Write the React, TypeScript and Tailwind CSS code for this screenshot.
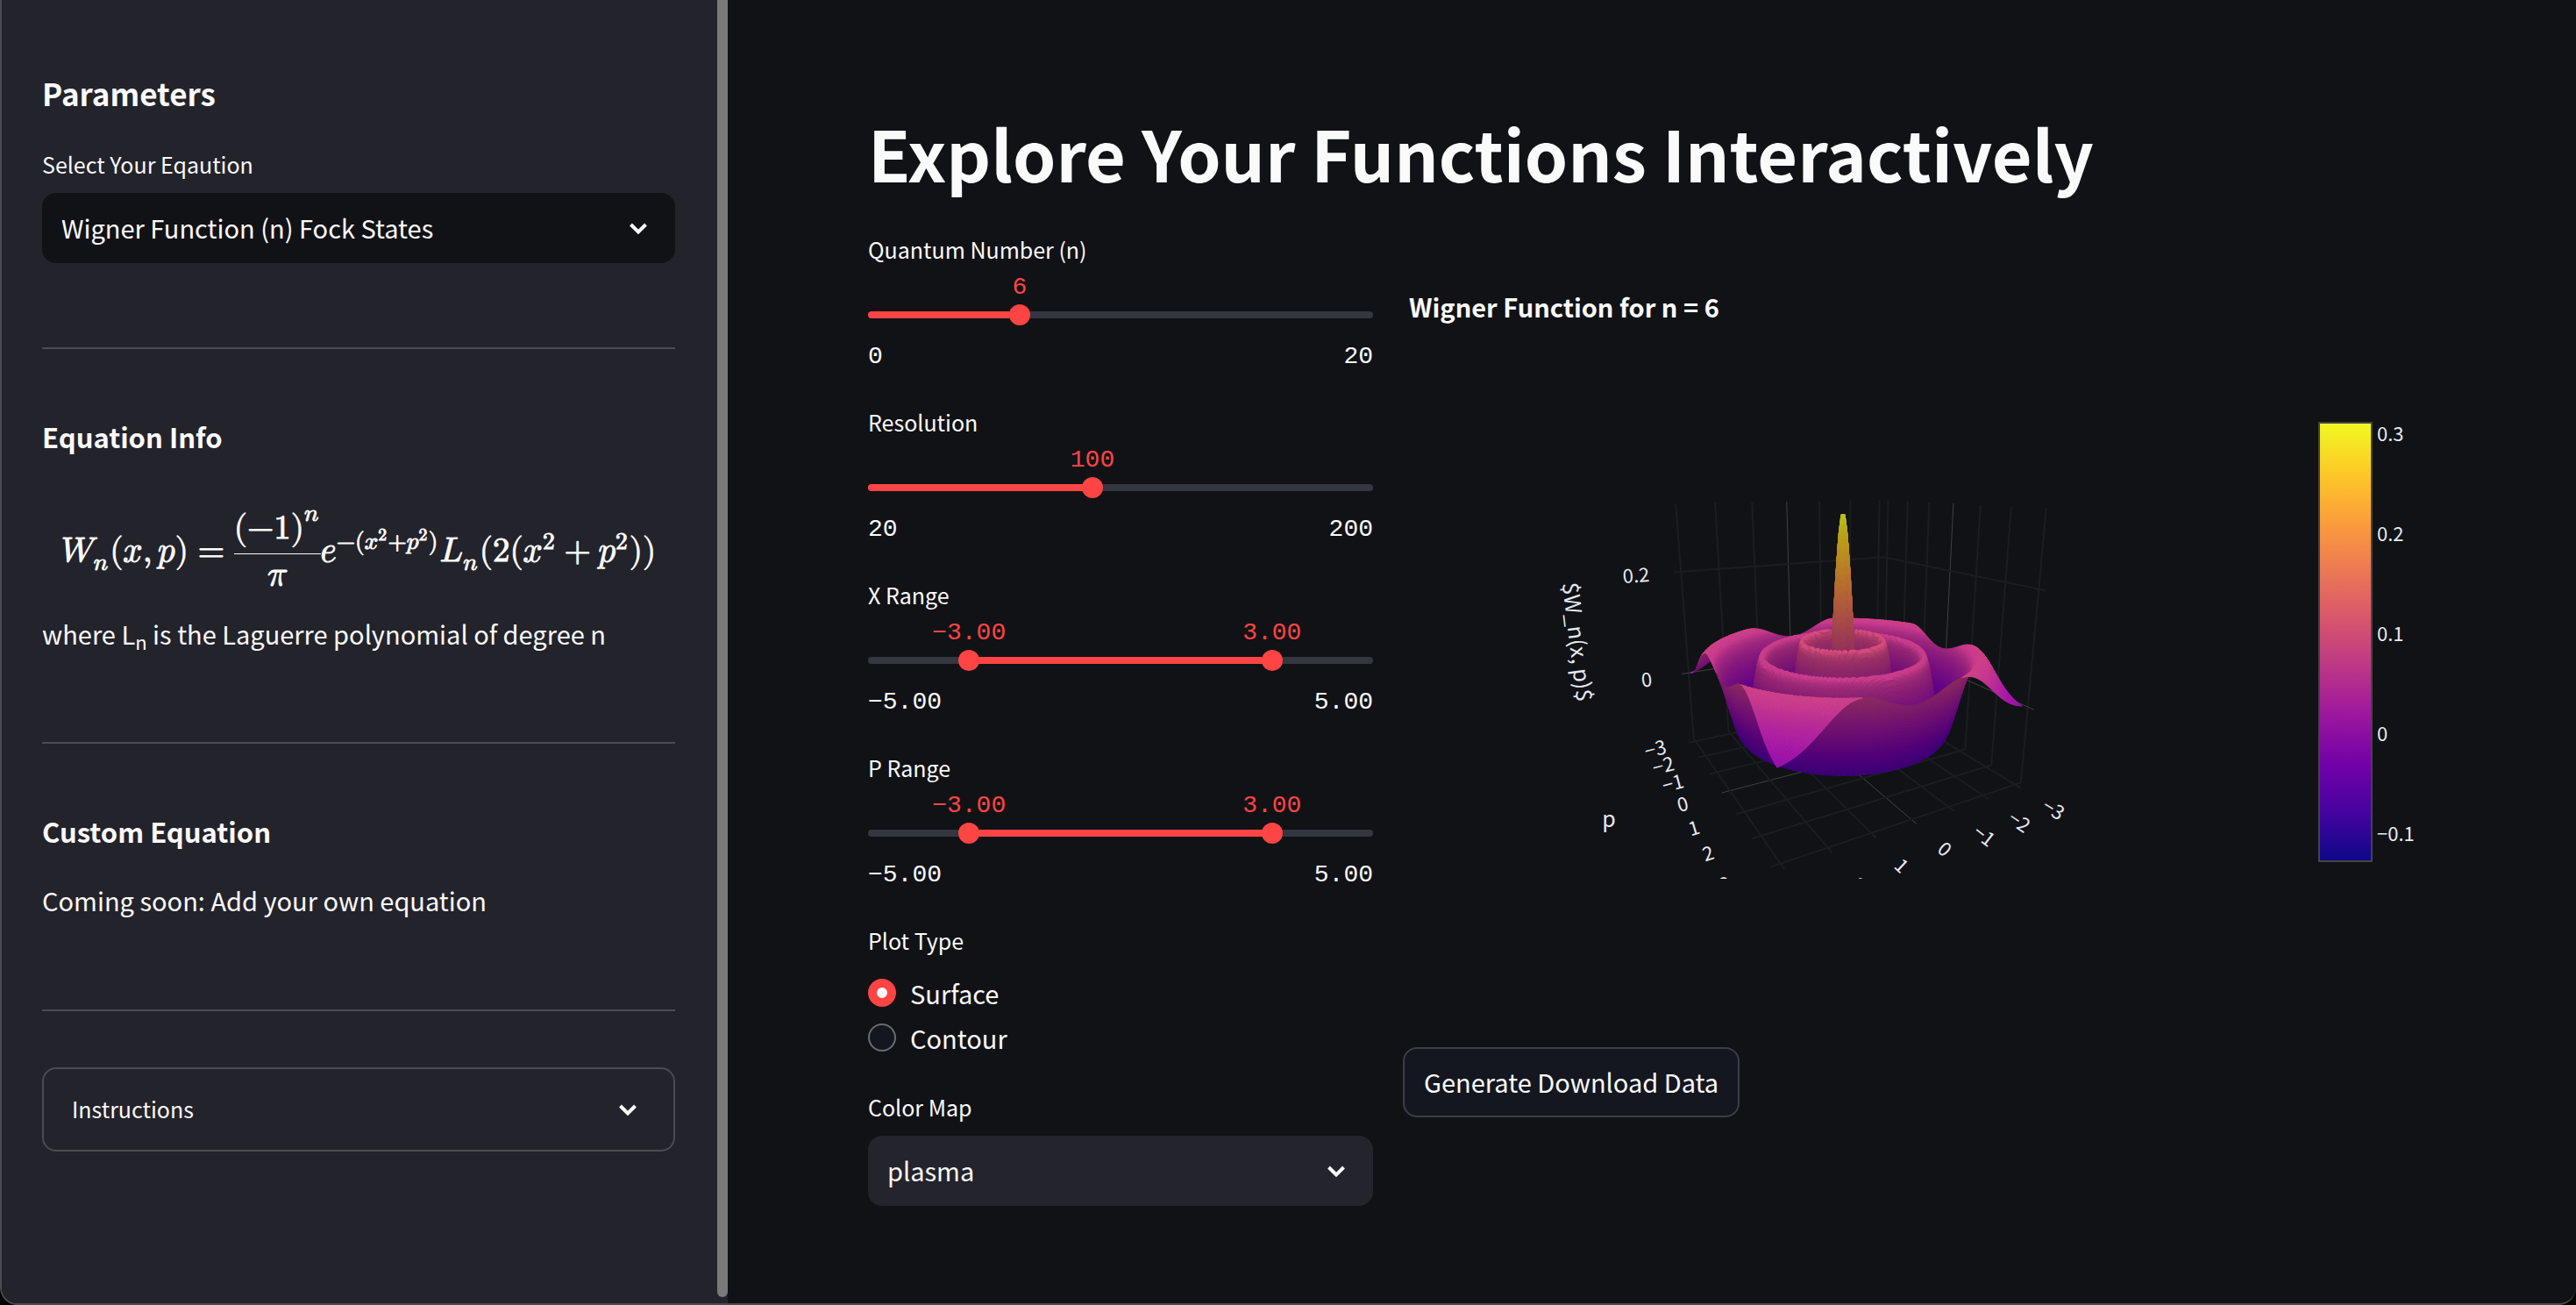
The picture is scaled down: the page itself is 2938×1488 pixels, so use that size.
import React, { useId, useMemo, useState } from "react";

/* ---------- Wigner surface ---------- */

const HALF_RANGE = 3;
const AXIS = 3.1875;
const Z_LOW = -0.1412;
const Z_HIGH = 0.3247;
const C_LOW = -0.1275;
const C_HIGH = 0.311;

const PLASMA: [number, number, number][] = [
  [13, 8, 135],
  [70, 3, 159],
  [114, 1, 168],
  [156, 23, 158],
  [189, 55, 134],
  [216, 87, 107],
  [237, 121, 83],
  [251, 159, 58],
  [253, 202, 38],
  [240, 249, 33],
];

function laguerre(n: number, x: number) {
  let previous = 1;
  let current = 1 - x;
  if (n === 0) return previous;
  for (let k = 1; k < n; k++) {
    const next = ((2 * k + 1 - x) * current - k * previous) / (k + 1);
    previous = current;
    current = next;
  }
  return current;
}

function wigner(n: number, x: number, p: number) {
  const r2 = x * x + p * p;
  return ((n % 2 ? -1 : 1) / Math.PI) * Math.exp(-r2) * laguerre(n, 2 * r2);
}

/* Perspective camera: maps data space to chart pixels and a depth. */
function project(x: number, p: number, z: number): [number, number, number] {
  const a = x / 6.375;
  const b = p / 6.375;
  const c = (z - 0.09175) / 0.4659;
  const w = -0.2163 * a - 0.38846 * b - 0.12387 * c + 1;
  const u = (-0.87944 * a + 0.48194 * b - 0.00111 * c + 0.00692) / w;
  const v = (0.16563 * a + 0.29997 * b - 0.94653 * c - 0.16209) / w;
  return [500 + u * 300, 512 + v * 300, w];
}

function shade(z: number, light: number) {
  const t = Math.min(0.9999, Math.max(0, (z - C_LOW) / (C_HIGH - C_LOW))) * 9;
  const i = Math.floor(t);
  const f = t - i;
  const mix = PLASMA[i].map((c, k) =>
    Math.min(255, Math.round((c + (PLASMA[i + 1][k] - c) * f) * light)),
  );
  return `rgb(${mix[0]},${mix[1]},${mix[2]})`;
}

/* How far the surface normal points up, 0 on a cliff and 1 on a plateau. */
function upness(n: number, x: number, p: number) {
  const h = 0.03;
  const scale = 6.375 / 0.4659 / (2 * h);
  const sx = (wigner(n, x + h, p) - wigner(n, x - h, p)) * scale;
  const sp = (wigner(n, x, p + h) - wigner(n, x, p - h)) * scale;
  return 1 / Math.sqrt(1 + sx * sx + sp * sp);
}

type Vertex = { x: number; p: number; z: number; up: number; at: [number, number, number] };

function blend(a: Vertex, b: Vertex, c: Vertex, d: Vertex, s: number, t: number): Vertex {
  const mix = (k: "x" | "p" | "z" | "up") =>
    (a[k] * (1 - s) + b[k] * s) * (1 - t) + (d[k] * (1 - s) + c[k] * s) * t;
  const x = mix("x");
  const p = mix("p");
  const z = mix("z");
  return { x, p, z, up: mix("up"), at: project(x, p, z) };
}

function buildSurface(n: number, resolution: number) {
  const step = (2 * HALF_RANGE) / (resolution - 1);
  const quads: { d: string; fill: string; depth: number }[] = [];
  const push = (a: Vertex, b: Vertex, c: Vertex, d: Vertex) => {
    const area =
      (c.at[0] - a.at[0]) * (d.at[1] - b.at[1]) - (c.at[1] - a.at[1]) * (d.at[0] - b.at[0]);
    const up = (a.up + b.up + c.up + d.up) / 4;
    const s = Math.min(1, Math.max(0, (up - 0.08) / 0.5));
    const light = area > 0 ? 0.72 : 0.74 + 0.32 * s * s * (3 - 2 * s);
    quads.push({
      d: [a, b, c, d].map((q) => `${q.at[0].toFixed(1)},${q.at[1].toFixed(1)}`).join(" "),
      fill: shade((a.z + b.z + c.z + d.z) / 4, light),
      depth: a.at[2] + b.at[2] + c.at[2] + d.at[2],
    });
  };
  const grid: Vertex[][] = Array.from({ length: resolution }, (_, i) =>
    Array.from({ length: resolution }, (_, j) => {
      const x = -HALF_RANGE + i * step;
      const p = -HALF_RANGE + j * step;
      const z = wigner(n, x, p);
      return { x, p, z, up: upness(n, x, p), at: project(x, p, z) };
    }),
  );
  for (let i = 0; i < resolution - 1; i++) {
    for (let j = 0; j < resolution - 1; j++) {
      const a = grid[i][j];
      const b = grid[i + 1][j];
      const c = grid[i + 1][j + 1];
      const d = grid[i][j + 1];
      const heights = [a.z, b.z, c.z, d.z];
      const rise = Math.max(...heights) - Math.min(...heights);
      const parts = Math.min(5, Math.max(1, Math.ceil(rise / 0.009)));
      if (parts === 1) {
        push(a, b, c, d);
        continue;
      }
      for (let s = 0; s < parts; s++) {
        for (let t = 0; t < parts; t++) {
          push(
            blend(a, b, c, d, s / parts, t / parts),
            blend(a, b, c, d, (s + 1) / parts, t / parts),
            blend(a, b, c, d, (s + 1) / parts, (t + 1) / parts),
            blend(a, b, c, d, s / parts, (t + 1) / parts),
          );
        }
      }
    }
  }
  return quads.sort((q, r) => r.depth - q.depth);
}

function gridLines() {
  const lines: { from: number[]; to: number[]; zero: boolean }[] = [];
  for (let k = -3; k <= 3; k++) {
    const zero = k === 0;
    lines.push({ from: [AXIS, k, Z_LOW], to: [-AXIS, k, Z_LOW], zero });
    lines.push({ from: [k, AXIS, Z_LOW], to: [k, -AXIS, Z_LOW], zero });
    lines.push({ from: [k, -AXIS, Z_LOW], to: [k, -AXIS, Z_HIGH], zero });
    lines.push({ from: [-AXIS, k, Z_LOW], to: [-AXIS, k, Z_HIGH], zero });
  }
  for (const z of [0, 0.2]) {
    lines.push({ from: [AXIS, -AXIS, z], to: [-AXIS, -AXIS, z], zero: z === 0 });
    lines.push({ from: [-AXIS, -AXIS, z], to: [-AXIS, AXIS, z], zero: z === 0 });
  }
  return lines;
}

const TICKS: { text: string; x: number; y: number; turn: number }[] = [
  { text: "0.2", x: 266, y: 388, turn: -4 },
  { text: "0", x: 278, y: 507, turn: -6 },
  { text: "−3", x: 288, y: 586, turn: -14 },
  { text: "−2", x: 297, y: 605, turn: -14 },
  { text: "−1", x: 308, y: 625, turn: -15 },
  { text: "0", x: 319, y: 649, turn: -15 },
  { text: "1", x: 332, y: 676, turn: -17 },
  { text: "2", x: 348, y: 705, turn: -18 },
  { text: "3", x: 367, y: 740, turn: -18 },
  { text: "−3", x: 742, y: 655, turn: 31 },
  { text: "−2", x: 703, y: 669, turn: 34 },
  { text: "−1", x: 663, y: 685, turn: 38 },
  { text: "0", x: 618, y: 700, turn: 40 },
  { text: "1", x: 569, y: 719, turn: 43 },
  { text: "2", x: 520, y: 741, turn: 45 },
];

const COLORBAR_TICKS = ["0.3", "0.2", "0.1", "0", "−0.1"];

function SurfaceChart({ n, resolution }: { n: number; resolution: number }) {
  const quads = useMemo(() => buildSurface(n, resolution), [n, resolution]);
  const lines = useMemo(gridLines, []);
  return (
    <svg
      viewBox="0 0 1178 900"
      className="block w-full font-['Noto_Sans_CJK_SC',sans-serif]"
      role="img"
      aria-label={`Wigner Function for n = ${n}`}
    >
      <defs>
        <linearGradient id="plasma-bar" x1="0" y1="1" x2="0" y2="0">
          {PLASMA.map((c, i) => (
            <stop key={i} offset={i / 9} stopColor={`rgb(${c[0]},${c[1]},${c[2]})`} />
          ))}
        </linearGradient>
        <clipPath id="scene">
          <rect x="0" y="100" width="1000" height="634" />
        </clipPath>
      </defs>

      <text x="7" y="94" className="fill-[#fafafa] text-[29px] font-bold">
        Wigner Function for n = {n}
      </text>

      <g clipPath="url(#scene)">
        {lines.map((line, i) => {
          const a = project(line.from[0], line.from[1], line.from[2]);
          const b = project(line.to[0], line.to[1], line.to[2]);
          return (
            <line
              key={i}
              x1={a[0]}
              y1={a[1]}
              x2={b[0]}
              y2={b[1]}
              className={line.zero ? "stroke-[#414141]" : "stroke-[#1c1d20]"}
              strokeWidth={line.zero ? 1 : 2}
            />
          );
        })}
        {quads.map((q, i) => (
          <polygon key={i} points={q.d} fill={q.fill} stroke={q.fill} strokeWidth="1" />
        ))}
        <g className="fill-[#e6eaf1] text-[22px]" textAnchor="middle">
          {TICKS.map((t, i) => (
            <text key={i} transform={`translate(${t.x} ${t.y}) rotate(${t.turn})`} y="8">
              {t.text}
            </text>
          ))}
        </g>
        <g className="fill-[#e6eaf1] text-[25px]" textAnchor="middle">
          <text transform="translate(198 464) rotate(83)" y="8">
            $W_n(x, p)$
          </text>
          <text x="235" y="675">
            p
          </text>
        </g>
      </g>

      <rect
        x="1045"
        y="214"
        width="60"
        height="500"
        fill="url(#plasma-bar)"
        className="stroke-[#444444]"
        strokeWidth="2"
      />
      <g className="fill-[#e6eaf1] text-[22px]">
        {COLORBAR_TICKS.map((t, i) => (
          <text key={t} x="1111" y={235 + i * 114}>
            {t}
          </text>
        ))}
      </g>
    </svg>
  );
}

/* ---------- Controls ---------- */

function Chevron() {
  return (
    <svg viewBox="0 0 24 16" className="h-4 w-6 shrink-0" aria-hidden="true">
      <path
        d="M3.5 4 12 12.5 20.5 4"
        fill="none"
        stroke="#fafafa"
        strokeWidth="4"
      />
    </svg>
  );
}

function SelectBox({
  label,
  options,
  tone,
}: {
  label: string;
  options: string[];
  tone: "dark" | "light";
}) {
  const id = useId();
  return (
    <div className="flex flex-col">
      <label htmlFor={id} className="text-[25px] leading-8">
        {label}
      </label>
      <div className="relative mt-[17px]">
        <select
          id={id}
          className={`h-20 w-full appearance-none rounded-2xl pr-20 pl-[22px] text-[29px] outline-none ${
            tone === "dark" ? "bg-[#111216]" : "bg-[#23242c]"
          }`}
        >
          {options.map((o) => (
            <option key={o}>{o}</option>
          ))}
        </select>
        <span className="pointer-events-none absolute inset-y-0 right-[30px] flex items-center">
          <Chevron />
        </span>
      </div>
    </div>
  );
}

const RANGE_CLASS =
  "pointer-events-none absolute inset-y-0 -inset-x-3 h-6 w-[calc(100%+24px)] appearance-none bg-transparent outline-none " +
  "[&::-webkit-slider-thumb]:pointer-events-auto [&::-webkit-slider-thumb]:size-6 [&::-webkit-slider-thumb]:appearance-none [&::-webkit-slider-thumb]:rounded-full [&::-webkit-slider-thumb]:bg-[#ff4444]";

function Slider({
  label,
  min,
  max,
  step,
  start,
  digits = 0,
}: {
  label: string;
  min: number;
  max: number;
  step: number;
  start: number[];
  digits?: number;
}) {
  const [values, setValues] = useState(start);
  const id = useId();
  const show = (v: number) => v.toFixed(digits).replace("-", "−");
  const at = (v: number) => ((v - min) / (max - min)) * 100;
  const low = values.length > 1 ? at(values[0]) : 0;
  const high = at(values[values.length - 1]);
  return (
    <div className="flex flex-col">
      <label htmlFor={`${id}-0`} className="text-[25px] leading-8">
        {label}
      </label>
      <div className="relative mt-3 h-8 font-['Liberation_Mono',monospace] text-[28px] leading-8 text-[#ff4444]">
        {values.map((v, i) => (
          <output
            key={i}
            htmlFor={`${id}-${i}`}
            className="absolute -translate-x-1/2"
            style={{ left: `${at(v)}%` }}
          >
            {show(v)}
          </output>
        ))}
      </div>
      <div className="relative mt-[3px] flex h-6 items-center">
        <div
          className="h-2 w-full rounded-full"
          style={{
            background: `linear-gradient(to right, #343640 ${low}%, #ff4444 ${low}%, #ff4444 ${high}%, #343640 ${high}%)`,
          }}
        />
        {values.map((v, i) => (
          <input
            key={i}
            id={`${id}-${i}`}
            type="range"
            aria-label={values.length > 1 ? `${label} ${i ? "maximum" : "minimum"}` : label}
            min={min}
            max={max}
            step={step}
            value={v}
            onChange={(e) =>
              setValues(values.map((old, k) => (k === i ? Number(e.target.value) : old)))
            }
            className={RANGE_CLASS}
          />
        ))}
      </div>
      <div className="mt-5 flex justify-between font-['Liberation_Mono',monospace] text-[28px] leading-8">
        <span>{show(min)}</span>
        <span>{show(max)}</span>
      </div>
    </div>
  );
}

function PlotType() {
  return (
    <fieldset className="flex flex-col">
      <legend className="text-[25px] leading-8">Plot Type</legend>
      <div className="mt-5 flex flex-col gap-[3px]">
        {["Surface", "Contour"].map((name) => (
          <label key={name} className="flex h-12 items-center gap-4 text-[29px] leading-[48px]">
            <input
              type="radio"
              name="plot-type"
              defaultChecked={name === "Surface"}
              className="size-8 appearance-none rounded-full border-2 border-[#6a6b6e] bg-[#14171f] checked:border-10 checked:border-[#ff4444] checked:bg-[#fafafa]"
            />
            {name}
          </label>
        ))}
      </div>
    </fieldset>
  );
}

/* ---------- Sidebar ---------- */

function WignerEquation() {
  return (
    <math
      display="block"
      className="text-[39px] text-[#fafafa] [-webkit-text-stroke:1px_#fafafa]"
      aria-label="Wigner function of the n-th Fock state"
    >
      <mrow>
        <msub>
          <mi>W</mi>
          <mi>n</mi>
        </msub>
        <mo stretchy="false">(</mo>
        <mi>x</mi>
        <mo>,</mo>
        <mi>p</mi>
        <mo stretchy="false">)</mo>
        <mo>=</mo>
        <mfrac>
          <mrow>
            <mo stretchy="false">(</mo>
            <mo form="prefix" lspace="0" rspace="0">−</mo>
            <mn>1</mn>
            <msup>
              <mo stretchy="false">)</mo>
              <mi>n</mi>
            </msup>
          </mrow>
          <mi>π</mi>
        </mfrac>
        <msup>
          <mi>e</mi>
          <mrow>
            <mo form="prefix" lspace="0" rspace="0">−</mo>
            <mo stretchy="false">(</mo>
            <msup>
              <mi>x</mi>
              <mn>2</mn>
            </msup>
            <mo lspace="0" rspace="0">+</mo>
            <msup>
              <mi>p</mi>
              <mn>2</mn>
            </msup>
            <mo stretchy="false">)</mo>
          </mrow>
        </msup>
        <msub>
          <mi>L</mi>
          <mi>n</mi>
        </msub>
        <mo stretchy="false">(</mo>
        <mn>2</mn>
        <mo stretchy="false">(</mo>
        <msup>
          <mi>x</mi>
          <mn>2</mn>
        </msup>
        <mo>+</mo>
        <msup>
          <mi>p</mi>
          <mn>2</mn>
        </msup>
        <mo stretchy="false">)</mo>
        <mo stretchy="false">)</mo>
      </mrow>
    </math>
  );
}

function Divider() {
  return <hr className="border-t-2 border-[#4b4c51]" />;
}

function Sidebar() {
  return (
    <aside className="flex w-[828px] shrink-0 bg-[#23232b]">
      <div className="flex grow flex-col pt-[82px] pr-12 pl-[46px]">
        <h2 className="mb-[41px] text-[35px] leading-[48px] font-bold">Parameters</h2>
        <SelectBox
          label="Select Your Eqaution"
          options={["Wigner Function (n) Fock States"]}
          tone="dark"
        />
        <div className="mt-24 mb-20">
          <Divider />
        </div>
        <h3 className="text-[31px] leading-10 font-bold">Equation Info</h3>
        <div className="mt-[47px] flex h-[120px] items-center justify-center">
          <WignerEquation />
        </div>
        <p className="mt-[13px] text-[29px] leading-[48px]">
          where L<sub className="text-[22px]">n</sub> is the Laguerre polynomial of degree n
        </p>
        <div className="mt-[100px] mb-20">
          <Divider />
        </div>
        <h3 className="text-[31px] leading-10 font-bold">Custom Equation</h3>
        <p className="mt-[34px] text-[29px] leading-[48px]">
          Coming soon: Add your own equation
        </p>
        <div className="mt-[101px] mb-16">
          <Divider />
        </div>
        <button
          type="button"
          aria-expanded="false"
          className="flex h-24 items-center justify-between rounded-2xl border-2 border-[#4b4c51] pr-10 pl-8 text-[25px]"
        >
          Instructions
          <Chevron />
        </button>
      </div>
      <div className="mb-[7px] w-3 shrink-0 rounded-b-full bg-[#7a7a7d]" />
    </aside>
  );
}

/* ---------- Page ---------- */

export default function App() {
  return (
    <div className="min-h-screen bg-black font-['Noto_Sans_CJK_SC',sans-serif] text-[#fafafa]">
      <div className="flex min-h-screen overflow-hidden rounded-b-[20px] border-b-2 border-l-2 border-[#4b4c50] bg-[#111216]">
        <Sidebar />
        <main className="min-w-0 grow px-40 pt-[121px]">
          <h1 className="text-[79px] leading-[106px] font-bold">
            Explore Your Functions Interactively
          </h1>
          <div className="mt-[41px] grid grid-cols-[576fr_1178fr] gap-[34px]">
            <div className="flex flex-col gap-[42px]">
              <Slider label="Quantum Number (n)" min={0} max={20} step={1} start={[6]} />
              <Slider label="Resolution" min={20} max={200} step={10} start={[100]} />
              <Slider label="X Range" min={-5} max={5} step={0.1} start={[-3, 3]} digits={2} />
              <Slider label="P Range" min={-5} max={5} step={0.1} start={[-3, 3]} digits={2} />
              <PlotType />
              <div className="-mt-[3px]">
                <SelectBox label="Color Map" options={["plasma"]} tone="light" />
              </div>
            </div>
            <div>
              <SurfaceChart n={6} resolution={100} />
              <button
                type="button"
                className="mt-[26px] h-20 rounded-2xl border-2 border-[#3b3e45] bg-[#14171f] px-[22px] text-[29px]"
              >
                Generate Download Data
              </button>
            </div>
          </div>
        </main>
      </div>
    </div>
  );
}
